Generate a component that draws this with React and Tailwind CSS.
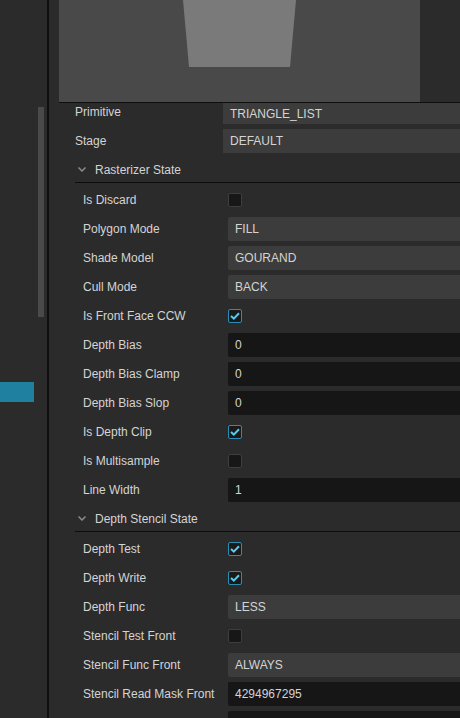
import React from "react";

const F = { fontFamily: '"Liberation Sans", Arial, sans-serif' };

function Check({ on }) {
  return (
    <div
      className={
        "w-[14px] h-[14px] rounded-[2px] border flex items-center justify-center " +
        (on ? "border-[#2a8db3] bg-[#1a1a1a]" : "border-[#3e3e3e] bg-[#171717]")
      }
    >
      {on && (
        <svg width="10" height="8" viewBox="0 0 10 8">
          <path d="M1 4 L3.8 6.6 L9 1.2" fill="none" stroke="#5ec9ea" strokeWidth="2" />
        </svg>
      )}
    </div>
  );
}

function Row({ label, type, value }) {
  return (
    <div className="h-[29px] flex items-center pl-[34px] shrink-0">
      <div className="w-[145px] shrink-0 text-[12px] text-[#d4d4d4] whitespace-nowrap">{label}</div>
      {type === "check" ? (
        <Check on={value} />
      ) : (
        <div
          className={
            "flex-1 h-[24px] flex items-center pl-[7px] text-[12px] text-[#d4d4d4] rounded-l-[2px] " +
            (type === "num" ? "bg-[#161616]" : "bg-[#3c3c3c]")
          }
        >
          {value}
        </div>
      )}
    </div>
  );
}

function Header({ label }) {
  return (
    <div className="h-[30px] pl-[26px] shrink-0">
      <div className="h-[28px] pt-[2px] flex items-center border-b border-[#0e0e0e]">
        <svg width="8" height="5" viewBox="0 0 8 5" className="ml-[3px] mr-[9px]">
          <path d="M0.5 0.5 L4 4 L7.5 0.5" fill="none" stroke="#8c8c8c" strokeWidth="1.5" />
        </svg>
        <span className="text-[12px] text-[#d4d4d4]">{label}</span>
      </div>
    </div>
  );
}

export default function App() {
  const raster = [
    ["Is Discard", "check", false],
    ["Polygon Mode", "sel", "FILL"],
    ["Shade Model", "sel", "GOURAND"],
    ["Cull Mode", "sel", "BACK"],
    ["Is Front Face CCW", "check", true],
    ["Depth Bias", "num", "0"],
    ["Depth Bias Clamp", "num", "0"],
    ["Depth Bias Slop", "num", "0"],
    ["Is Depth Clip", "check", true],
    ["Is Multisample", "check", false],
    ["Line Width", "num", "1"],
  ];
  const depth = [
    ["Depth Test", "check", true],
    ["Depth Write", "check", true],
    ["Depth Func", "sel", "LESS"],
    ["Stencil Test Front", "check", false],
    ["Stencil Func Front", "sel", "ALWAYS"],
    ["Stencil Read Mask Front", "num", "4294967295"],
    ["", "num", ""],
  ];
  return (
    <div style={F} className="w-[460px] h-[718px] flex overflow-hidden bg-[#2b2b2b]">
      <div className="w-[47px] shrink-0 relative bg-[#2b2b2b]">
        <div className="absolute left-[38px] top-[107px] w-[6px] h-[210px] bg-[#4a4a4a]" />
        <div className="mt-[382px] w-[34px] h-[20px] bg-[#20809f]" />
      </div>
      <div className="w-[2px] shrink-0 bg-[#0f0f0f]" />
      <div className="flex-1 flex flex-col min-w-0">
        <div className="ml-[10px] border-b border-[#0e0e0e] shrink-0">
          <div className="w-[361px] h-[102px] bg-[#494949]">
            <svg width="361" height="102" viewBox="0 0 361 102">
              <polygon points="124,0 237,0 231,67 130,67" fill="#7a7a7a" />
            </svg>
          </div>
        </div>
        <div className="h-[23px] flex items-start pl-[26px] shrink-0">
          <div className="w-[148px] shrink-0 h-[18px] leading-[18px] text-[12px] text-[#d4d4d4]">Primitive</div>
          <div className="flex-1 h-[21px] flex items-center pl-[7px] text-[12px] text-[#d4d4d4] bg-[#3c3c3c]">TRIANGLE_LIST</div>
        </div>
        <div className="h-[29px] flex items-center pl-[26px] shrink-0">
          <div className="w-[148px] shrink-0 text-[12px] text-[#d4d4d4]">Stage</div>
          <div className="flex-1 h-[24px] flex items-center pl-[7px] text-[12px] text-[#d4d4d4] bg-[#3c3c3c]">DEFAULT</div>
        </div>
        <Header label="Rasterizer State" />
        {raster.map(([l, t, v]) => (
          <Row key={l} label={l} type={t} value={v} />
        ))}
        <Header label="Depth Stencil State" />
        {depth.map(([l, t, v], i) => (
          <Row key={i} label={l} type={t} value={v} />
        ))}
      </div>
    </div>
  );
}
